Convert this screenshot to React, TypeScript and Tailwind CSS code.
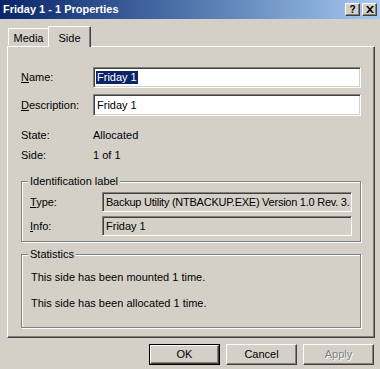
import React from "react";

const sunkenWhite =
  "bg-white border border-t-[#808080] border-l-[#808080] border-r-white border-b-white shadow-[inset_1px_1px_0_#404040,inset_-1px_-1px_0_#d4d0c8]";
const sunkenGray =
  "bg-[#d4d0c8] border border-t-[#808080] border-l-[#808080] border-r-white border-b-white shadow-[inset_1px_1px_0_#404040,inset_-1px_-1px_0_#d4d0c8]";

function Group({ title, className, children }: { title: string; className: string; children: React.ReactNode }) {
  return (
    <div
      className={
        "relative w-[340px] border border-[#808080] shadow-[inset_1px_1px_0_#fff,1px_1px_0_#fff] " + className
      }
    >
      <span className="absolute left-[6px] top-[-8px] bg-[#d4d0c8] px-[2px] leading-[14px]">{title}</span>
      {children}
    </div>
  );
}

function Btn({ label, def, disabled }: { label: string; def?: boolean; disabled?: boolean }) {
  return (
    <div
      className={
        "w-[71px] h-[21px] flex items-center justify-center " +
        (def ? "border border-black " : "")
      }
    >
      <div
        className={
          "w-full h-full flex items-center justify-center border border-t-white border-l-white border-r-[#404040] border-b-[#404040] shadow-[inset_-1px_-1px_0_#808080] " +
          (disabled ? "text-[#808080] [text-shadow:1px_1px_0_#fff]" : "text-black")
        }
      >
        {label}
      </div>
    </div>
  );
}

export default function App() {
  return (
    <div className="w-[380px] h-[369px] bg-[#d4d0c8] font-['Liberation_Sans',Arial,sans-serif] text-[11px] text-black overflow-hidden">
      {/* Title bar */}
      <div className="h-[19px] flex items-center justify-between pl-[3px] pr-[3px] bg-gradient-to-r from-[#0a246a] to-[#a6caf0]">
        <span className="text-white font-bold text-[11px]">Friday 1 - 1 Properties</span>
        <div className="flex gap-[2px]">
          <div className="w-[15px] h-[13px] flex items-center justify-center border border-t-white border-l-white border-r-[#404040] border-b-[#404040] shadow-[inset_-1px_-1px_0_#808080] bg-[#d4d0c8] font-bold text-[10px] leading-none">
            ?
          </div>
          <div className="w-[15px] h-[13px] flex items-center justify-center border border-t-white border-l-white border-r-[#404040] border-b-[#404040] shadow-[inset_-1px_-1px_0_#808080] bg-[#d4d0c8]">
            <svg width="8" height="7" viewBox="0 0 8 7">
              <path d="M0 0h2l2 2.2L6 0h2L5 3.5 8 7H6L4 4.8 2 7H0l3-3.5z" fill="#000" />
            </svg>
          </div>
        </div>
      </div>

      {/* Tabs */}
      <div className="flex items-end h-[21px] mt-[6px] pl-[8px] relative z-10">
        <div className="w-[41px] h-[17px] flex items-center justify-center border-t border-l border-white border-r border-r-[#808080] mb-[1px] pt-[2px]">
          Media
        </div>
        <div className="w-[43px] h-[21px] flex items-start justify-center pt-[3px] bg-[#d4d0c8] border-t border-l border-white border-r border-r-[#404040] shadow-[inset_-1px_0_0_#808080] -ml-[1px] mb-[-1px]">
          Side
        </div>
      </div>

      {/* Panel */}
      <div className="ml-[7px] w-[368px] h-[292px] border border-t-white border-l-white border-r-[#404040] border-b-[#404040] shadow-[inset_-1px_-1px_0_#808080] pl-[13px]">
        <div className="flex items-center h-[21px] mt-[20px]">
          <span className="w-[72px]">
            <u>N</u>ame:
          </span>
          <div className={"w-[268px] h-[21px] flex items-center pl-[2px] " + sunkenWhite}>
            <span className="bg-[#0a246a] text-white px-[1px] leading-[13px]">Friday 1</span>
          </div>
        </div>
        <div className="flex items-center h-[22px] mt-[6px]">
          <span className="w-[72px]">
            <u>D</u>escription:
          </span>
          <div className={"w-[268px] h-[22px] flex items-center pl-[3px] " + sunkenWhite}>Friday 1</div>
        </div>
        <div className="flex items-center h-[20px] mt-[9px]">
          <span className="w-[72px]">State:</span>
          <span>Allocated</span>
        </div>
        <div className="flex items-center h-[20px]">
          <span className="w-[72px]">Side:</span>
          <span>1 of 1</span>
        </div>

        <Group title="Identification label" className="mt-[16px] h-[61px] pt-[10px] pl-[8px]">
          <div className="flex items-center h-[20px]">
            <span className="w-[72px]">
              <u>T</u>ype:
            </span>
            <div className={"w-[250px] h-[20px] flex items-center pl-[3px] whitespace-nowrap overflow-hidden tracking-[-0.25px] " + sunkenGray}>
              Backup Utility (NTBACKUP.EXE) Version 1.0 Rev. 3.
            </div>
          </div>
          <div className="flex items-center h-[20px] mt-[4px]">
            <span className="w-[72px]">
              <u>I</u>nfo:
            </span>
            <div className={"w-[250px] h-[20px] flex items-center pl-[3px] " + sunkenGray}>Friday 1</div>
          </div>
        </Group>

        <Group title="Statistics" className="mt-[12px] h-[74px] pl-[9px] pt-[15px]">
          <div className="h-[14px] flex items-center">This side has been mounted 1 time.</div>
          <div className="h-[14px] flex items-center mt-[12px]">This side has been allocated 1 time.</div>
        </Group>
      </div>

      {/* Buttons */}
      <div className="flex justify-end gap-[6px] pr-[6px] mt-[6px]">
        <Btn label="OK" def />
        <Btn label="Cancel" />
        <Btn label="Apply" disabled />
      </div>
    </div>
  );
}
